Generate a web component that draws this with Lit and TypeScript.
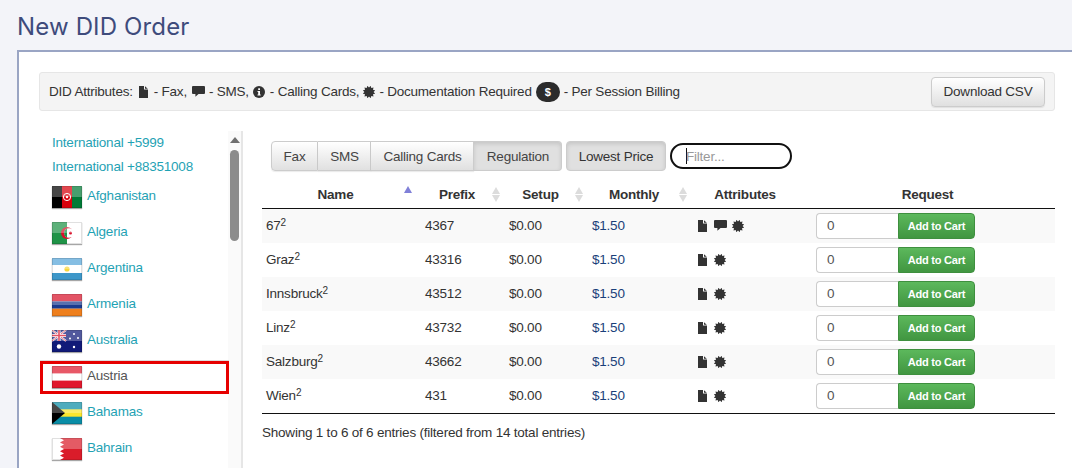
import { LitElement, html, css, svg } from 'lit';
import { customElement } from 'lit/decorators.js';

const certPoints = () => {
  const pts: string[] = [];
  for (let i = 0; i < 24; i++) {
    const r = i % 2 ? 6.4 : 4.6;
    const a = (i * Math.PI) / 12;
    pts.push(`${(6 + r * Math.sin(a)).toFixed(2)},${(6 - r * Math.cos(a)).toFixed(2)}`);
  }
  return pts.join(' ');
};

const fileIcon = html`<svg class="ic file" width="9" height="12" viewBox="0 0 9 12"><path fill="#333" d="M0 0H5V3.6H9V12H0Z M6 0.2L8.8 2.8H6Z"/></svg>`;
const smsIcon = html`<svg class="ic sms" width="13" height="11" viewBox="0 0 13 11"><path fill="#333" d="M1 0H12Q13 0 13 1V7Q13 8 12 8H6.5L3.4 10.8V8H1Q0 8 0 7V1Q0 0 1 0Z"/></svg>`;
const infoIcon = html`<svg class="ic info-ic" width="12" height="12" viewBox="0 0 12 12"><circle cx="6" cy="6" r="6" fill="#333"/><rect x="5.2" y="2.3" width="1.8" height="1.7" fill="#fff"/><path fill="#fff" d="M4.5 5H7V8.5H7.7V9.6H4.5V8.5H5.2V6.1H4.5Z"/></svg>`;
const certIcon = html`<svg class="ic cert" width="12" height="12" viewBox="0 0 12 12"><polygon fill="#333" points=${certPoints()}/></svg>`;

const gloss = svg`<rect width="30" height="11" fill="#fff" opacity=".28"/><rect x=".5" y=".5" width="29" height="21" fill="none" stroke="#000" stroke-opacity=".12"/>`;

const flags: Record<string, unknown> = {
  Afghanistan: svg`<rect width="10" height="22" fill="#000"/><rect x="10" width="10" height="22" fill="#d8000c"/><rect x="20" width="10" height="22" fill="#007a36"/><circle cx="15" cy="11" r="3.6" fill="none" stroke="#fff" stroke-width="1"/><circle cx="15" cy="11" r="1.2" fill="#fff"/>`,
  Algeria: svg`<rect width="15" height="22" fill="#1f9347"/><rect x="15" width="15" height="22" fill="#fff"/><circle cx="15" cy="11" r="6" fill="#d8102a"/><circle cx="17" cy="11" r="4.8" fill="#fff"/><path d="M15 6.6A4.8 4.8 0 0 0 15 15.4Z" fill="#1f9347"/><circle cx="18.5" cy="11" r="1.5" fill="#d8102a"/>`,
  Argentina: svg`<rect width="30" height="22" fill="#fff"/><rect width="30" height="7" fill="#57a5d8"/><rect y="15" width="30" height="7" fill="#3d97c9"/><circle cx="15" cy="11" r="2.6" fill="#f9d63c"/>`,
  Armenia: svg`<rect width="30" height="7.4" fill="#d8132a"/><rect y="7.4" width="30" height="7.3" fill="#1a3a8f"/><rect y="14.7" width="30" height="7.3" fill="#ee7f1d"/>`,
  Australia: svg`<rect width="30" height="22" fill="#101a78"/><path d="M0 0L14 11M14 0L0 11" stroke="#fff" stroke-width="2"/><path d="M0 0L14 11M14 0L0 11" stroke="#d8102a" stroke-width=".8"/><path d="M7 0V11M0 5.5H14" stroke="#fff" stroke-width="3"/><path d="M7 0V11M0 5.5H14" stroke="#d8102a" stroke-width="1.6"/><circle cx="7" cy="16.5" r="2.2" fill="#fff"/><circle cx="22" cy="4" r="1" fill="#fff"/><circle cx="18" cy="8.5" r="1" fill="#fff"/><circle cx="26" cy="8" r="1" fill="#fff"/><circle cx="22" cy="17" r="1.2" fill="#fff"/>`,
  Austria: svg`<rect width="30" height="22" fill="#fff"/><rect width="30" height="7.4" fill="#e0182d"/><rect y="14.6" width="30" height="7.4" fill="#e0182d"/>`,
  Bahamas: svg`<rect width="30" height="22" fill="#0a8da6"/><rect y="7.3" width="30" height="7.4" fill="#fbe62d"/><path d="M0 0L13 11L0 22Z" fill="#000"/>`,
  Bahrain: svg`<rect width="30" height="22" fill="#da1c2a"/><path fill="#fff" d="M0 0H8L12 2.2L8 4.4L12 6.6L8 8.8L12 11L8 13.2L12 15.4L8 17.6L12 19.8L8 22H0Z"/>`,
};

const countries = Object.keys(flags);

const rows = [
  { name: '67', prefix: '4367', sms: true },
  { name: 'Graz', prefix: '43316' },
  { name: 'Innsbruck', prefix: '43512' },
  { name: 'Linz', prefix: '43732' },
  { name: 'Salzburg', prefix: '43662' },
  { name: 'Wien', prefix: '431' },
];

@customElement('app-root')
export class AppRoot extends LitElement {
  static styles = css`
    :host {
      display: block;
      width: 1072px;
      height: 468px;
      overflow: hidden;
      background: #f3f4f9;
      font-family: 'Liberation Sans', Arial, sans-serif;
      font-size: 13.5px;
      letter-spacing: -0.22px;
      color: #333;
    }
    h1 {
      margin: 0;
      height: 50px;
      padding: 12px 0 0 17px;
      box-sizing: border-box;
      font-family: 'Inter', sans-serif;
      font-weight: 400;
      font-size: 24px;
      letter-spacing: 0.15px;
      line-height: 30px;
      color: #3e4b7c;
    }
    .panel {
      margin-left: 17px;
      height: 418px;
      box-sizing: border-box;
      background: #fff;
      border-top: 2px solid #9aa5c4;
      border-left: 2px solid #9aa5c4;
      padding: 20px 17px 0 20px;
    }
    .bar {
      height: 39px;
      box-sizing: border-box;
      display: flex;
      align-items: center;
      justify-content: space-between;
      padding: 0 9px;
      background: #f4f4f4;
      border: 1px solid #e6e6e6;
      border-radius: 3px;
    }
    .legend {
      display: flex;
      align-items: center;
      gap: 5px;
      white-space: nowrap;
    }
    .legend .file {
      margin: 0 1px;
    }
    .legend .sms {
      margin-right: -1px;
    }
    .legend .info-ic {
      margin-left: -1px;
    }
    .legend .cards {
      margin-right: -1px;
    }
    .legend .cert {
      margin-right: -1px;
    }
    .ic {
      display: block;
      flex: none;
    }
    .pill {
      width: 24px;
      height: 20px;
      margin: 0 -1px;
      border-radius: 10px;
      background: #2b2b2b;
      color: #fff;
      font-size: 11px;
      font-weight: 700;
      line-height: 20px;
      text-align: center;
    }
    button {
      font: inherit;
      letter-spacing: inherit;
      color: #333;
      height: 30px;
      padding: 0;
      background: linear-gradient(#fff, #e0e0e0);
      border: 1px solid #ccc;
      border-radius: 4px;
      box-shadow: 0 1px 1px rgba(0, 0, 0, 0.08);
      white-space: nowrap;
    }
    button.on {
      background: #e0e0e0;
      box-shadow: inset 0 2px 4px rgba(0, 0, 0, 0.12);
      border-color: #ccc;
    }
    .csv {
      width: 114px;
    }
    .body {
      display: flex;
      margin-top: 20px;
    }
    .side {
      width: 204px;
      height: 337px;
      box-sizing: border-box;
      display: flex;
      border-right: 2px solid #e6e6e6;
      overflow: hidden;
      flex: none;
    }
    .list {
      width: 189px;
      flex: none;
    }
    .intl {
      height: 24px;
      line-height: 24px;
      padding-left: 13px;
      color: #1fa2b4;
    }
    .item {
      position: relative;
      height: 36px;
      display: flex;
      align-items: center;
      gap: 5px;
      padding-left: 13px;
      color: #1fa2b4;
    }
    .item span {
      margin-top: -4px;
    }
    .item.current {
      color: #555;
    }
    .item.current::after {
      content: '';
      position: absolute;
      left: 1px;
      right: -1px;
      top: 2px;
      height: 33px;
      box-sizing: border-box;
      border: 3px solid #e60000;
      box-shadow: 0 -1px 0 #ddd;
    }
    .flag {
      display: block;
      flex: none;
      box-shadow: 0 1px 1px rgba(0, 0, 0, 0.35);
    }
    .track {
      width: 13px;
      flex: none;
      background: #fafafa;
      display: flex;
      flex-direction: column;
      align-items: center;
    }
    .up {
      margin-top: 6px;
      width: 0;
      height: 0;
      border-left: 5px solid transparent;
      border-right: 5px solid transparent;
      border-bottom: 6px solid #6f6f6f;
    }
    .thumb {
      margin-top: 7px;
      width: 9px;
      height: 91px;
      border-radius: 5px;
      background: #8c8c8c;
    }
    .main {
      flex: 1;
      padding: 10px 0 0 19px;
      min-width: 0;
    }
    .tools {
      display: flex;
      align-items: center;
      padding-left: 9px;
      margin-bottom: 7px;
    }
    .group {
      display: flex;
      margin-right: 4px;
    }
    .group button {
      border-radius: 0;
      border-left-width: 0;
      padding-left: 1px;
      color: #444;
    }
    .group button:first-child {
      border-left-width: 1px;
      padding-left: 0;
      border-radius: 4px 0 0 4px;
    }
    .group button:last-child {
      border-radius: 0 4px 4px 0;
    }
    .fax {
      width: 47px;
    }
    .smsb {
      width: 53px;
    }
    .cc {
      width: 103px;
    }
    .reg {
      width: 88px;
    }
    .price {
      width: 100px;
    }
    .filter {
      margin-left: 4px;
      width: 122px;
      height: 26px;
      box-sizing: border-box;
      padding-left: 14px;
      border: 2px solid #111;
      border-radius: 13px;
      display: flex;
      align-items: center;
      color: #999;
    }
    .filter i {
      width: 1px;
      height: 16px;
      margin-right: -1px;
      background: #111;
    }
    table {
      width: 793px;
      border-collapse: separate;
      border-spacing: 0;
      table-layout: fixed;
      border-bottom: 1px solid #111;
    }
    th {
      position: relative;
      height: 31px;
      padding: 2px 16px 0 4px;
      box-sizing: border-box;
      border-bottom: 1px solid #111;
      text-align: center;
      font-weight: 700;
      color: #333;
    }
    th:nth-child(5) {
      padding-right: 18px;
    }
    .sort {
      position: absolute;
      right: 5px;
      top: 9px;
      width: 0;
      height: 0;
      border-left: 4.5px solid transparent;
      border-right: 4.5px solid transparent;
      border-bottom: 7px solid #dcdcdc;
    }
    .sort::after {
      content: '';
      position: absolute;
      left: -4.5px;
      top: 8px;
      border-left: 4.5px solid transparent;
      border-right: 4.5px solid transparent;
      border-top: 7px solid #dcdcdc;
    }
    .sort.asc {
      top: 8px;
      margin-right: 4px;
      border-bottom-color: #8080d8;
    }
    .sort.asc::after {
      display: none;
    }
    td {
      height: 34px;
      padding: 0 4px 2px;
      box-sizing: border-box;
      white-space: nowrap;
    }
    tbody tr:nth-child(odd) td {
      background: #f9f9f9;
    }
    sup {
      font-size: 10px;
      line-height: 0;
      vertical-align: 4px;
    }
    .money {
      color: #1a3f7a;
    }
    .attrs {
      display: flex;
      align-items: center;
      gap: 7px;
      padding: 1px 0 0 2px;
    }
    .attrs .sms {
      margin-right: -2px;
    }
    .req {
      display: flex;
      margin-top: 1px;
    }
    .qty {
      width: 82px;
      height: 26px;
      box-sizing: border-box;
      padding-left: 10px;
      line-height: 24px;
      background: #fff;
      border: 1px solid #ccc;
      border-right: 0;
      border-radius: 4px 0 0 4px;
      color: #555;
    }
    .add {
      width: 77px;
      height: 26px;
      color: #fff;
      font-size: 11px;
      font-weight: 700;
      background: linear-gradient(#5cb85c, #419641);
      border: 1px solid #3e8f3e;
      border-radius: 0 4px 4px 0;
      box-shadow: none;
    }
    .info {
      margin-top: 10px;
      line-height: 18px;
    }
  `;

  render() {
    return html`
      <h1>New DID Order</h1>
      <div class="panel">
        <div class="bar">
          <div class="legend">
            <span>DID Attributes:</span>
            ${fileIcon}
            <span>- Fax,</span>
            ${smsIcon}
            <span>- SMS,</span>
            ${infoIcon}
            <span class="cards">- Calling Cards,</span>
            ${certIcon}
            <span>- Documentation Required</span>
            <span class="pill">$</span>
            <span>- Per Session Billing</span>
          </div>
          <button class="csv">Download CSV</button>
        </div>
        <div class="body">
          <div class="side">
            <div class="list">
              <div class="intl">International +5999</div>
              <div class="intl">International +88351008</div>
              ${countries.map(
                (c) => html`
                  <div class="item ${c === 'Austria' ? 'current' : ''}">
                    <svg class="flag" width="30" height="22" viewBox="0 0 30 22">${flags[c]}${gloss}</svg>
                    <span>${c}</span>
                  </div>
                `
              )}
            </div>
            <div class="track"><div class="up"></div><div class="thumb"></div></div>
          </div>
          <div class="main">
            <div class="tools">
              <div class="group">
                <button class="fax">Fax</button>
                <button class="smsb">SMS</button>
                <button class="cc">Calling Cards</button>
                <button class="reg on">Regulation</button>
              </div>
              <button class="price on">Lowest Price</button>
              <div class="filter"><i></i>Filter...</div>
            </div>
            <table>
              <colgroup>
                <col style="width:159px" />
                <col style="width:84px" />
                <col style="width:83px" />
                <col style="width:104px" />
                <col style="width:120px" />
                <col />
              </colgroup>
              <thead>
                <tr>
                  <th>Name<span class="sort asc"></span></th>
                  <th>Prefix<span class="sort"></span></th>
                  <th>Setup<span class="sort"></span></th>
                  <th>Monthly<span class="sort"></span></th>
                  <th>Attributes</th>
                  <th>Request</th>
                </tr>
              </thead>
              <tbody>
                ${rows.map(
                  (r) => html`
                    <tr>
                      <td>${r.name}<sup>2</sup></td>
                      <td>${r.prefix}</td>
                      <td>$0.00</td>
                      <td class="money">$1.50</td>
                      <td><div class="attrs">${fileIcon}${r.sms ? smsIcon : ''}${certIcon}</div></td>
                      <td><div class="req"><div class="qty">0</div><button class="add">Add to Cart</button></div></td>
                    </tr>
                  `
                )}
              </tbody>
            </table>
            <div class="info">Showing 1 to 6 of 6 entries (filtered from 14 total entries)</div>
          </div>
        </div>
      </div>
    `;
  }
}
